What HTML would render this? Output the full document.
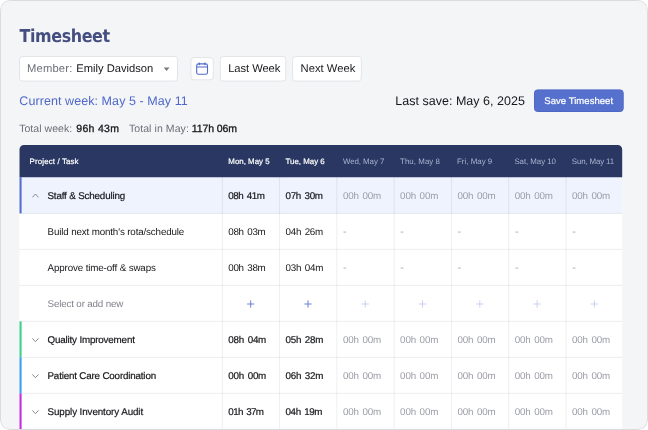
<!DOCTYPE html>
<html><head><meta charset="utf-8"><title>Timesheet</title>
<style>
*,*:before,*:after{box-sizing:border-box;margin:0;padding:0}
html,body{width:648px;height:430px;background:#fff;overflow:hidden}
body{font-family:"Liberation Sans",sans-serif;color:#111;position:relative;text-rendering:geometricPrecision}
.card{position:absolute;left:0;top:0;width:648px;height:430px;background:#f4f5f7;border-radius:10px;overflow:hidden}
.card:after{content:"";position:absolute;left:0;top:0;width:648px;height:430px;border:1px solid #dcdcde;border-radius:10px;pointer-events:none}
h1{position:absolute;left:19.5px;top:26px;font-family:"DejaVu Sans Condensed","DejaVu Sans",sans-serif;font-weight:bold;font-size:17.7px;color:#454e80;line-height:22px;letter-spacing:-0.38px;white-space:nowrap}
.tx{position:absolute;left:0;top:0;width:648px;height:430px;will-change:transform}
.t{position:absolute;white-space:pre;line-height:20px;height:20px}
svg{position:absolute;left:0;top:0;overflow:visible}
</style></head><body>
<div class="card">
<svg width="648" height="430" viewBox="0 0 648 430">
<rect x="19.5" y="56.5" width="158.00" height="24.60" rx="3" fill="#fff" stroke="#e3e4e8"/>
<rect x="190.9" y="57.6" width="22.40" height="22.20" rx="3" fill="#fff" stroke="#e3e4e8"/>
<rect x="220.3" y="56.5" width="65.50" height="24.60" rx="3" fill="#fff" stroke="#e3e4e8"/>
<rect x="292.6" y="56.5" width="68.70" height="24.60" rx="3" fill="#fff" stroke="#e3e4e8"/>
<rect x="534.5" y="89.9" width="88.70" height="21.60" rx="3" fill="#5671cd" stroke="#4d67c7"/>
<rect x="19.5" y="150.0" width="602.70" height="280.0" fill="#fff"/>
<rect x="19.5" y="177.2" width="602.70" height="36.20" fill="#eff3fe"/>
<path d="M19.5 177.2V149.5a4.5 4.5 0 0 1 4.5 -4.5H617.7a4.5 4.5 0 0 1 4.5 4.5V177.2Z" fill="#293762"/>
<rect x="221.80" y="177.2" width="1" height="252.80" fill="rgba(20,26,55,0.075)"/>
<rect x="279.08" y="177.2" width="1" height="252.80" fill="rgba(20,26,55,0.075)"/>
<rect x="336.36" y="177.2" width="1" height="252.80" fill="rgba(20,26,55,0.075)"/>
<rect x="393.64" y="177.2" width="1" height="252.80" fill="rgba(20,26,55,0.075)"/>
<rect x="450.92" y="177.2" width="1" height="252.80" fill="rgba(20,26,55,0.075)"/>
<rect x="508.20" y="177.2" width="1" height="252.80" fill="rgba(20,26,55,0.075)"/>
<rect x="565.48" y="177.2" width="1" height="252.80" fill="rgba(20,26,55,0.075)"/>
<rect x="19.5" y="212.90" width="602.70" height="1" fill="rgba(20,26,55,0.075)"/>
<rect x="19.5" y="248.90" width="602.70" height="1" fill="rgba(20,26,55,0.075)"/>
<rect x="19.5" y="284.90" width="602.70" height="1" fill="rgba(20,26,55,0.075)"/>
<rect x="19.5" y="320.90" width="602.70" height="1" fill="rgba(20,26,55,0.075)"/>
<rect x="19.5" y="356.90" width="602.70" height="1" fill="rgba(20,26,55,0.075)"/>
<rect x="19.5" y="392.90" width="602.70" height="1" fill="rgba(20,26,55,0.075)"/>
<rect x="19.5" y="177.20" width="2.1" height="36.20" fill="#5470d0"/>
<rect x="19.5" y="321.40" width="2.1" height="36.00" fill="#3ecf8e"/>
<rect x="19.5" y="357.40" width="2.1" height="36.00" fill="#3b9ff0"/>
<rect x="19.5" y="393.40" width="2.1" height="36.60" fill="#c22fe0"/>
<path d="M250.70 300.4v7.2M247.10 304h7.2" stroke="#5b74d6" stroke-width="0.9" fill="none"/>
<path d="M307.98 300.4v7.2M304.38 304h7.2" stroke="#5b74d6" stroke-width="0.9" fill="none"/>
<path d="M365.26 300.4v7.2M361.66 304h7.2" stroke="#c3ccef" stroke-width="0.9" fill="none"/>
<path d="M422.54 300.4v7.2M418.94 304h7.2" stroke="#c3ccef" stroke-width="0.9" fill="none"/>
<path d="M479.82 300.4v7.2M476.22 304h7.2" stroke="#c3ccef" stroke-width="0.9" fill="none"/>
<path d="M537.10 300.4v7.2M533.50 304h7.2" stroke="#c3ccef" stroke-width="0.9" fill="none"/>
<path d="M594.38 300.4v7.2M590.78 304h7.2" stroke="#c3ccef" stroke-width="0.9" fill="none"/>
<path d="M32.4 197.4L35.45 194L38.5 197.4" stroke="#7b7e86" stroke-width="0.9" fill="none"/>
<path d="M32.4 338.4L35.45 341.7L38.5 338.4" stroke="#7b7e86" stroke-width="0.9" fill="none"/>
<path d="M32.4 374.4L35.45 377.7L38.5 374.4" stroke="#7b7e86" stroke-width="0.9" fill="none"/>
<path d="M32.4 410.4L35.45 413.7L38.5 410.4" stroke="#7b7e86" stroke-width="0.9" fill="none"/>
<path d="M163.7 67.4H169.5L166.6 70.9Z" fill="#777a80"/>
<g fill="none" stroke="#5169cc" stroke-width="1.1"><rect x="196.7" y="63.9" width="10.8" height="10.4" rx="1.8"/><path d="M196.7 67H207.5M199.3 62.4V65.2M204.9 62.4V65.2"/></g>
</svg>
<div class="tx">
<h1>Timesheet</h1>
<div class="t" style="left:27.0px;top:59px;font-size:11.2px;color:#6b6e76;letter-spacing:0.193px;">Member:</div>
<div class="t" style="left:76.3px;top:59px;font-size:11.2px;color:#16171a;letter-spacing:-0.008px;">Emily Davidson</div>
<div class="t" style="left:228.2px;top:59px;font-size:11.2px;color:#16171a;letter-spacing:-0.057px;">Last Week</div>
<div class="t" style="left:300.5px;top:59px;font-size:11.2px;color:#16171a;letter-spacing:0.048px;">Next Week</div>
<div class="t" style="left:19.3px;top:91px;font-size:12.5px;color:#4f68c9;letter-spacing:0.074px;">Current week: May 5 - May 11</div>
<div class="t" style="left:395.3px;top:91px;font-size:12.5px;color:#16171a;letter-spacing:0.017px;">Last save: May 6, 2025</div>
<div class="t" style="left:544.3px;top:92px;font-size:9.5px;color:#fff;letter-spacing:0.052px;-webkit-text-stroke:0.2px currentColor;">Save Timesheet</div>
<div class="t" style="left:19.2px;top:119px;font-size:10.5px;color:#6b6e76;letter-spacing:0.047px;">Total week:</div>
<div class="t" style="left:76.3px;top:119px;font-size:10.5px;color:#16171a;letter-spacing:0.288px;-webkit-text-stroke:0.3px currentColor;">96h 43m</div>
<div class="t" style="left:128.9px;top:119px;font-size:10.5px;color:#6b6e76;letter-spacing:0.087px;">Total in May:</div>
<div class="t" style="left:191.8px;top:119px;font-size:10.5px;color:#16171a;letter-spacing:-0.105px;-webkit-text-stroke:0.3px currentColor;">117h 06m</div>
<div class="t" style="left:29.6px;top:152px;font-size:7.9px;color:#fff;letter-spacing:0.129px;-webkit-text-stroke:0.2px currentColor;">Project / Task</div>
<div class="t" style="left:228.3px;top:152px;font-size:7.9px;color:#fff;letter-spacing:0.018px;-webkit-text-stroke:0.2px currentColor;">Mon, May 5</div>
<div class="t" style="left:285.6px;top:152px;font-size:7.9px;color:#fff;letter-spacing:-0.010px;-webkit-text-stroke:0.2px currentColor;">Tue, May 6</div>
<div class="t" style="left:342.9px;top:152px;font-size:7.9px;color:#aab2cf;letter-spacing:-0.063px;">Wed, May 7</div>
<div class="t" style="left:400.0px;top:152px;font-size:7.9px;color:#aab2cf;letter-spacing:0.059px;">Thu, May 8</div>
<div class="t" style="left:457.0px;top:152px;font-size:7.9px;color:#aab2cf;letter-spacing:0.014px;">Fri, May 9</div>
<div class="t" style="left:514.4px;top:152px;font-size:7.9px;color:#aab2cf;letter-spacing:-0.061px;">Sat, May 10</div>
<div class="t" style="left:571.8px;top:152px;font-size:7.9px;color:#aab2cf;letter-spacing:-0.142px;">Sun, May 11</div>
<div class="t" style="left:47.5px;top:187px;font-size:9.8px;color:#16171a;letter-spacing:-0.161px;-webkit-text-stroke:0.2px currentColor;">Staff &amp; Scheduling</div>
<div class="t" style="left:47.5px;top:223px;font-size:9.8px;color:#16171a;letter-spacing:-0.145px;">Build next month's rota/schedule</div>
<div class="t" style="left:47.5px;top:259px;font-size:9.8px;color:#16171a;letter-spacing:-0.133px;">Approve time-off &amp; swaps</div>
<div class="t" style="left:47.5px;top:295px;font-size:9.8px;color:#808389;letter-spacing:-0.159px;">Select or add new</div>
<div class="t" style="left:47.5px;top:331px;font-size:9.8px;color:#16171a;letter-spacing:-0.166px;-webkit-text-stroke:0.2px currentColor;">Quality Improvement</div>
<div class="t" style="left:47.5px;top:367px;font-size:9.8px;color:#16171a;letter-spacing:-0.172px;-webkit-text-stroke:0.2px currentColor;">Patient Care Coordination</div>
<div class="t" style="left:47.5px;top:403px;font-size:9.8px;color:#16171a;letter-spacing:-0.086px;-webkit-text-stroke:0.2px currentColor;">Supply Inventory Audit</div>
<div class="t" style="left:228.3px;top:187px;font-size:9.8px;color:#16171a;letter-spacing:-0.440px;word-spacing:1.2px;-webkit-text-stroke:0.2px currentColor;">08h 41m</div>
<div class="t" style="left:285.6px;top:187px;font-size:9.8px;color:#16171a;letter-spacing:-0.323px;word-spacing:1.2px;-webkit-text-stroke:0.2px currentColor;">07h 30m</div>
<div class="t" style="left:342.9px;top:187px;font-size:9.8px;color:#9b9ea6;letter-spacing:-0.140px;word-spacing:1.0px;">00h 00m</div>
<div class="t" style="left:400.1px;top:187px;font-size:9.8px;color:#9b9ea6;letter-spacing:-0.140px;word-spacing:1.0px;">00h 00m</div>
<div class="t" style="left:457.4px;top:187px;font-size:9.8px;color:#9b9ea6;letter-spacing:-0.140px;word-spacing:1.0px;">00h 00m</div>
<div class="t" style="left:514.7px;top:187px;font-size:9.8px;color:#9b9ea6;letter-spacing:-0.140px;word-spacing:1.0px;">00h 00m</div>
<div class="t" style="left:572.0px;top:187px;font-size:9.8px;color:#9b9ea6;letter-spacing:-0.140px;word-spacing:1.0px;">00h 00m</div>
<div class="t" style="left:228.3px;top:223px;font-size:9.8px;color:#16171a;letter-spacing:-0.323px;word-spacing:1.2px;">08h 03m</div>
<div class="t" style="left:285.6px;top:223px;font-size:9.8px;color:#16171a;letter-spacing:-0.307px;word-spacing:1.2px;">04h 26m</div>
<div class="t" style="left:343.1px;top:222px;font-size:11px;color:#a9acb3;">-</div>
<div class="t" style="left:400.3px;top:222px;font-size:11px;color:#a9acb3;">-</div>
<div class="t" style="left:457.6px;top:222px;font-size:11px;color:#a9acb3;">-</div>
<div class="t" style="left:514.9px;top:222px;font-size:11px;color:#a9acb3;">-</div>
<div class="t" style="left:572.2px;top:222px;font-size:11px;color:#a9acb3;">-</div>
<div class="t" style="left:228.3px;top:259px;font-size:9.8px;color:#16171a;letter-spacing:-0.323px;word-spacing:1.2px;">00h 38m</div>
<div class="t" style="left:285.6px;top:259px;font-size:9.8px;color:#16171a;letter-spacing:-0.257px;word-spacing:1.2px;">03h 04m</div>
<div class="t" style="left:343.1px;top:258px;font-size:11px;color:#a9acb3;">-</div>
<div class="t" style="left:400.3px;top:258px;font-size:11px;color:#a9acb3;">-</div>
<div class="t" style="left:457.6px;top:258px;font-size:11px;color:#a9acb3;">-</div>
<div class="t" style="left:514.9px;top:258px;font-size:11px;color:#a9acb3;">-</div>
<div class="t" style="left:572.2px;top:258px;font-size:11px;color:#a9acb3;">-</div>
<div class="t" style="left:228.3px;top:331px;font-size:9.8px;color:#16171a;letter-spacing:-0.223px;word-spacing:1.2px;-webkit-text-stroke:0.2px currentColor;">08h 04m</div>
<div class="t" style="left:285.6px;top:331px;font-size:9.8px;color:#16171a;letter-spacing:-0.257px;word-spacing:1.2px;-webkit-text-stroke:0.2px currentColor;">05h 28m</div>
<div class="t" style="left:342.9px;top:331px;font-size:9.8px;color:#9b9ea6;letter-spacing:-0.140px;word-spacing:1.0px;">00h 00m</div>
<div class="t" style="left:400.1px;top:331px;font-size:9.8px;color:#9b9ea6;letter-spacing:-0.140px;word-spacing:1.0px;">00h 00m</div>
<div class="t" style="left:457.4px;top:331px;font-size:9.8px;color:#9b9ea6;letter-spacing:-0.140px;word-spacing:1.0px;">00h 00m</div>
<div class="t" style="left:514.7px;top:331px;font-size:9.8px;color:#9b9ea6;letter-spacing:-0.140px;word-spacing:1.0px;">00h 00m</div>
<div class="t" style="left:572.0px;top:331px;font-size:9.8px;color:#9b9ea6;letter-spacing:-0.140px;word-spacing:1.0px;">00h 00m</div>
<div class="t" style="left:228.3px;top:367px;font-size:9.8px;color:#16171a;letter-spacing:-0.223px;word-spacing:1.2px;-webkit-text-stroke:0.2px currentColor;">00h 00m</div>
<div class="t" style="left:285.6px;top:367px;font-size:9.8px;color:#16171a;letter-spacing:-0.257px;word-spacing:1.2px;-webkit-text-stroke:0.2px currentColor;">06h 32m</div>
<div class="t" style="left:342.9px;top:367px;font-size:9.8px;color:#9b9ea6;letter-spacing:-0.140px;word-spacing:1.0px;">00h 00m</div>
<div class="t" style="left:400.1px;top:367px;font-size:9.8px;color:#9b9ea6;letter-spacing:-0.140px;word-spacing:1.0px;">00h 00m</div>
<div class="t" style="left:457.4px;top:367px;font-size:9.8px;color:#9b9ea6;letter-spacing:-0.140px;word-spacing:1.0px;">00h 00m</div>
<div class="t" style="left:514.7px;top:367px;font-size:9.8px;color:#9b9ea6;letter-spacing:-0.140px;word-spacing:1.0px;">00h 00m</div>
<div class="t" style="left:572.0px;top:367px;font-size:9.8px;color:#9b9ea6;letter-spacing:-0.140px;word-spacing:1.0px;">00h 00m</div>
<div class="t" style="left:228.3px;top:403px;font-size:9.8px;color:#16171a;letter-spacing:-0.607px;word-spacing:1.2px;-webkit-text-stroke:0.2px currentColor;">01h 37m</div>
<div class="t" style="left:285.6px;top:403px;font-size:9.8px;color:#16171a;letter-spacing:-0.423px;word-spacing:1.2px;-webkit-text-stroke:0.2px currentColor;">04h 19m</div>
<div class="t" style="left:342.9px;top:403px;font-size:9.8px;color:#9b9ea6;letter-spacing:-0.140px;word-spacing:1.0px;">00h 00m</div>
<div class="t" style="left:400.1px;top:403px;font-size:9.8px;color:#9b9ea6;letter-spacing:-0.140px;word-spacing:1.0px;">00h 00m</div>
<div class="t" style="left:457.4px;top:403px;font-size:9.8px;color:#9b9ea6;letter-spacing:-0.140px;word-spacing:1.0px;">00h 00m</div>
<div class="t" style="left:514.7px;top:403px;font-size:9.8px;color:#9b9ea6;letter-spacing:-0.140px;word-spacing:1.0px;">00h 00m</div>
<div class="t" style="left:572.0px;top:403px;font-size:9.8px;color:#9b9ea6;letter-spacing:-0.140px;word-spacing:1.0px;">00h 00m</div>
</div>
</div>
</body></html>
